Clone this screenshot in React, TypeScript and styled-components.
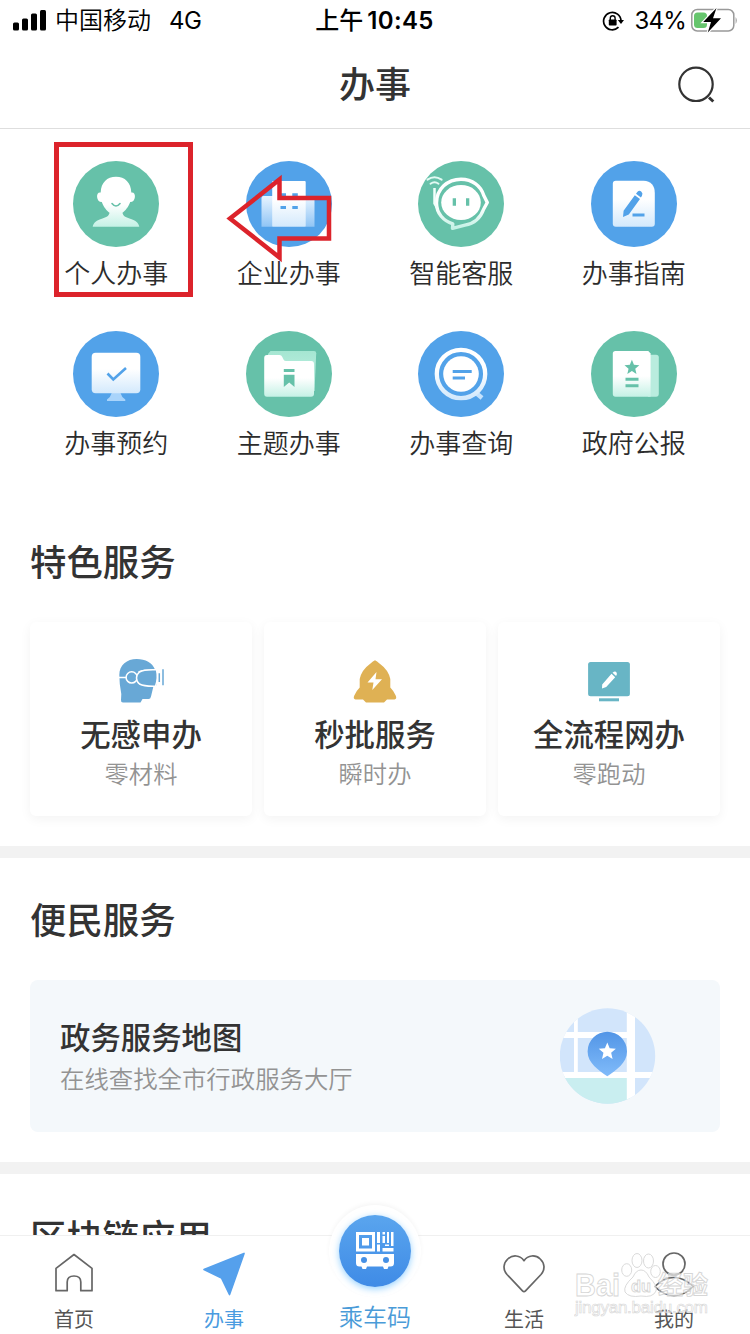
import React from 'react';
import styled, { createGlobalStyle } from 'styled-components';

const GlobalStyle = createGlobalStyle`
  body {
    margin: 0;
    background: #fff;
    font-family: 'Noto Sans CJK SC', sans-serif;
    color: #333;
  }
  svg { display: block; flex: none; }
`;

const GREEN = '#66c1a9';
const BLUE = '#52a2e9';

const Screen = styled.div`
  position: relative;
  width: 750px;
  height: 1334px;
  overflow: hidden;
  background: #fff;
  display: flex;
  flex-direction: column;
`;

const StatusBar = styled.div`
  flex: none;
  height: 41px;
  display: grid;
  grid-template-columns: 1fr auto 1fr;
  align-items: center;
  padding: 0 12px 0 13px;
  font-family: Inter, 'Noto Sans CJK SC', sans-serif;
  font-size: 24px;
  line-height: 41px;
  color: #000;
`;

const StatusGroup = styled.div<{ $end?: boolean }>`
  display: flex;
  align-items: center;
  justify-content: ${p => (p.$end ? 'flex-end' : 'flex-start')};
  white-space: nowrap;
`;

const Carrier = styled.span`
  margin-left: 8px;
  font-weight: 350;
`;

const Network = styled.span`
  margin-left: 18px;
  letter-spacing: -0.6px;
`;

const Clock = styled.div`
  font-weight: 600;
  letter-spacing: 0.4px;
`;

const Meridiem = styled.span`
  font-weight: 500;
  letter-spacing: 0;
  margin: 0 4px 0 -2px;
`;

const Percent = styled.span`
  margin: 0 4px 0 11px;
  letter-spacing: -0.8px;
`;

const Header = styled.header`
  flex: none;
  height: 87px;
  display: grid;
  grid-template-columns: 1fr auto 1fr;
  align-items: center;
  padding: 0 34px;
  border-bottom: 1px solid #dedede;
`;

const PageTitle = styled.h1`
  grid-column: 2;
  margin: -5px 0 0;
  font-size: 36px;
  line-height: 80px;
  font-weight: 500;
`;

const SearchButton = styled.div`
  justify-self: end;
`;

const ServiceGrid = styled.div`
  flex: none;
  display: grid;
  grid-template-columns: repeat(4, 1fr);
  grid-auto-rows: 170px;
  padding: 32px 30px 0;
  height: 340px;
`;

const Service = styled.div`
  display: flex;
  flex-direction: column;
  align-items: center;
`;

const ServiceLabel = styled.div`
  font-size: 26px;
  line-height: 30px;
  margin-top: 10px;
  font-weight: 350;
  color: #2c2c2c;
`;

const SectionTitle = styled.h2<{ $top: number }>`
  flex: none;
  margin: ${p => p.$top}px 0 0 30px;
  font-size: 36.4px;
  line-height: 40px;
  font-weight: 500;
`;

const CardRow = styled.div`
  flex: none;
  display: flex;
  gap: 12px;
  margin: 42px 30px 30px;
`;

const Card = styled.div`
  flex: 1;
  height: 194px;
  box-sizing: border-box;
  padding-top: 36px;
  display: flex;
  flex-direction: column;
  align-items: center;
  border-radius: 6px;
  background: #fff;
  box-shadow: 0 3px 12px rgba(0, 0, 0, 0.05);
`;

const CardTitle = styled.div`
  font-size: 30.4px;
  line-height: 36px;
  font-weight: 500;
  margin-top: 11px;
`;

const CardNote = styled.div`
  font-size: 24.3px;
  line-height: 30px;
  margin-top: 7px;
  font-weight: 350;
  color: #939393;
`;

const Divider = styled.div`
  flex: none;
  height: 12px;
  background: #f2f2f2;
`;

const MapCard = styled.div`
  flex: none;
  margin: 42px 30px 30px;
  height: 152px;
  box-sizing: border-box;
  padding: 4px 64px 0 30px;
  display: flex;
  justify-content: space-between;
  border-radius: 8px;
  background: #f4f8fb;
`;

const MapText = styled.div`
  padding-top: 34px;
`;

const MapTitle = styled.div`
  font-size: 30.4px;
  line-height: 36px;
  font-weight: 500;
`;

const MapNote = styled.div`
  font-size: 24.4px;
  line-height: 30px;
  margin-top: 9px;
  font-weight: 350;
  color: #939393;
`;

const MapArt = styled.div`
  padding-top: 24px;
`;

const TabBar = styled.nav`
  position: absolute;
  left: 0;
  right: 0;
  bottom: 0;
  height: 98px;
  display: grid;
  grid-template-columns: repeat(5, 1fr);
  background: #fff;
  border-top: 1px solid #f0f0f0;
`;

const Tab = styled.div<{ $active?: boolean }>`
  display: flex;
  flex-direction: column;
  align-items: center;
  padding: 13px 2px 0 0;
  font-size: 20px;
  line-height: 24px;
  color: ${p => (p.$active ? '#4a9be0' : '#555')};
`;

const TabLabel = styled.div`
  margin-top: 10px;
`;

const CenterTab = styled.div`
  display: flex;
  flex-direction: column;
  align-items: center;
  font-size: 24px;
  line-height: 28px;
  font-weight: 350;
  color: #4a9bd8;
`;

const RideButton = styled.div`
  margin-top: -31px;
  padding: 10px;
  border-radius: 50%;
  background: #fff;
  box-shadow: 0 -2px 4px rgba(0, 0, 0, 0.04);
`;

const RideDisc = styled.div`
  width: 72px;
  height: 72px;
  border-radius: 50%;
  display: flex;
  align-items: center;
  justify-content: center;
  background: linear-gradient(#5aa5ee, #3f8be6);
  box-shadow: 0 2px 7px rgba(80, 180, 255, 0.6);
`;

const RideLabel = styled.div`
  margin-top: 5px;
`;

const Highlight = styled.div`
  position: absolute;
  left: 54px;
  top: 142px;
  width: 129px;
  height: 145px;
  border: 5px solid #dc232b;
`;

const Pointer = styled.svg`
  position: absolute;
  left: 224px;
  top: 170px;
`;

const Watermark = styled.div`
  position: absolute;
  left: 574px;
  top: 1250px;
  width: 140px;
  height: 70px;
  opacity: 0.85;
`;

const Defs = () => (
  <svg width="0" height="0" style={{ position: 'absolute' }}>
    <defs>
      <linearGradient id="mint" x1="0" y1="0" x2="0" y2="1">
        <stop offset="0.55" stopColor="#fff" />
        <stop offset="1" stopColor="#c4f1e5" />
      </linearGradient>
      <linearGradient id="sky" x1="0" y1="0" x2="0" y2="1">
        <stop offset="0.4" stopColor="#fff" />
        <stop offset="1" stopColor="#d3e9fc" />
      </linearGradient>
      <linearGradient id="wing" x1="0" y1="0" x2="0" y2="1">
        <stop offset="0" stopColor="#e8f4ff" />
        <stop offset="1" stopColor="#90c5f5" />
      </linearGradient>
      <linearGradient id="mintBack" x1="0" y1="0" x2="0" y2="1">
        <stop offset="0" stopColor="#a5e6d2" />
        <stop offset="1" stopColor="#c9f3e7" />
      </linearGradient>
      <linearGradient id="pin" x1="0" y1="0" x2="0" y2="1">
        <stop offset="0" stopColor="#5295e6" />
        <stop offset="1" stopColor="#80bbfa" />
      </linearGradient>
    </defs>
  </svg>
);

const star = (cx: number, cy: number, r: number, k = 0.45) =>
  Array.from({ length: 10 }, (_, i) => {
    const a = (Math.PI / 5) * i - Math.PI / 2;
    const q = i % 2 ? r * k : r;
    return `${(cx + q * Math.cos(a)).toFixed(2)},${(cy + q * Math.sin(a)).toFixed(2)}`;
  }).join(' ');

const Round = ({ color, children }: { color: string; children: React.ReactNode }) => (
  <svg width="86" height="86" viewBox="0 0 86 86" fill="none">
    <circle cx="43" cy="43" r="43" fill={color} />
    {children}
  </svg>
);

const PersonIcon = () => (
  <Round color={GREEN}>
    <path
      fill="url(#mint)"
      d="M43 15.700C52 15.700 58 21.500 58.300 31.500C60.800 31 62.200 33.200 61.900 36C61.600 39 60 41 57.200 41C55.500 46 52 50 49.500 51.800C49.800 55 53 56.500 56.500 57.500C62.500 59.300 65.500 61.500 66.300 65.800H19.700C20.500 61.500 23.500 59.300 29.500 57.500C33 56.500 36.200 55 36.500 51.800C34 50 30.500 46 28.800 41C26 41 24.400 39 24.100 36C23.800 33.200 25.200 31 27.700 31.500C28 21.500 34 15.700 43 15.700Z"
    />
    <path d="M39 42.500Q43 47.500 47 42.500" stroke={GREEN} strokeWidth="1.600" strokeLinecap="round" />
  </Round>
);

const BuildingIcon = () => (
  <Round color={BLUE}>
    <path fill="url(#wing)" d="M15.500 37q0-2 2-2H27V65.800H15.500ZM59 35h7.500q2 0 2 2V65.800H59Z" />
    <rect x="26.200" y="20" width="33.500" height="45.800" rx="1" fill="url(#sky)" />
    <path fill={BLUE} d="M34.500 32.300h5.500v3h-5.500zM46.300 32.300h5.500v3h-5.500zM34.500 45h5.500v3h-5.500zM46.300 45h5.500v3h-5.500z" />
  </Round>
);

const RobotIcon = () => (
  <Round color={GREEN}>
    <path
      stroke="url(#mint)"
      strokeWidth="3.400"
      strokeLinejoin="round"
      d="M18.500 42C18.500 28 29.500 18.200 43 18.200C54.500 18.200 63 25 65.800 34.500L69.300 41.500L65.500 48.500C62.500 57 56 62.500 47 64.200L34.500 67.300L34.800 62.800C25.500 60 18.500 52.500 18.500 42Z"
    />
    <ellipse cx="43" cy="41.500" rx="19.800" ry="17.500" fill="#fff" />
    <path fill={GREEN} d="M34.700 37.300h3.300v7.400h-3.300zM48 37.300h3.300v7.400H48z" />
    <path d="M16.500 27V42.500L19 47" stroke="#f2fffb" strokeWidth="2.500" />
    <path d="M9.500 18.700Q16.400 14 23.600 18.700M12.500 22.700Q16.500 19.800 20.500 22.700" stroke="#e3faf3" strokeWidth="2" strokeLinecap="round" />
  </Round>
);

const GuideIcon = () => (
  <Round color={BLUE}>
    <path fill="url(#sky)" d="M24.800 19.700H52.500Q63.800 20.500 63.800 32V62.800Q63.800 65.800 60.800 65.800H24.800Q21.800 65.800 21.800 62.800V22.700Q21.800 19.700 24.800 19.700Z" />
    <path fill={BLUE} d="M43.800 34.200L49 37.900L37.800 53.500L32 56L32.600 49.800ZM45 32.800L46.500 30.800Q48.300 29 50.200 30.500Q52.300 32.300 51 34.700L49.900 36.400Z" />
    <path d="M41.500 54H53.500" stroke={BLUE} strokeWidth="3" />
  </Round>
);

const BookingIcon = () => (
  <Round color={BLUE}>
    <path fill="#a9d4fb" d="M38.700 62H47.500Q48.500 66 52.300 68.500V70H34V68.500Q37.700 66 38.700 62Z" />
    <rect x="18.700" y="21.700" width="48.600" height="40.600" rx="4" fill="url(#sky)" />
    <path d="M34.500 42.500L40.300 48.500L53 37" stroke={BLUE} strokeWidth="2.600" />
  </Round>
);

const FolderIcon = () => (
  <Round color={GREEN}>
    <path fill="url(#mintBack)" d="M24.500 20H68Q70.300 20 70.200 22.300L68.500 60H22V23Z" />
    <path fill="url(#mint)" d="M21 24H33.500Q35.500 24 36.300 26L37.500 28.500Q38.300 30 40 30H65.300Q68 30 68 33V62.800Q68 65.800 65 65.800H21Q18.200 65.800 18.200 62.800V27Q18.200 24 21 24Z" />
    <path fill={GREEN} d="M37.800 38H48.500V41H37.800ZM37.800 43.700H48.500V56L43.200 51.500L37.800 56Z" />
  </Round>
);

const QueryIcon = () => (
  <Round color={BLUE}>
    <path d="M57.500 61.500L64 67" stroke="#c5e2fc" strokeWidth="4.500" />
    <circle cx="43" cy="43" r="24.200" stroke="url(#sky)" strokeWidth="4.300" />
    <circle cx="43" cy="43" r="17.800" fill="#fff" />
    <path d="M34.700 40.400H53.700M34.700 47H47" stroke={BLUE} strokeWidth="3" />
  </Round>
);

const GazetteIcon = () => (
  <Round color={GREEN}>
    <path fill="#b9ecde" d="M57 23.700H65Q67.800 23.700 67.800 26.500V62.800Q67.800 65.800 65 65.800H57Z" />
    <path fill="url(#mint)" d="M24.500 20H57.300L59.600 22.500V65.800H24.500Q21.800 65.800 21.800 62.800V22.700Q21.800 20 24.500 20Z" />
    <polygon fill={GREEN} points={star(40.9, 36.6, 7.8)} />
    <path d="M34.500 48.300H47.500M34.500 54.700H47.500" stroke={GREEN} strokeWidth="3" />
  </Round>
);

const SERVICES = [
  { label: '个人办事', Icon: PersonIcon },
  { label: '企业办事', Icon: BuildingIcon },
  { label: '智能客服', Icon: RobotIcon },
  { label: '办事指南', Icon: GuideIcon },
  { label: '办事预约', Icon: BookingIcon },
  { label: '主题办事', Icon: FolderIcon },
  { label: '办事查询', Icon: QueryIcon },
  { label: '政府公报', Icon: GazetteIcon },
];

const HeadsetIcon = () => (
  <svg width="46" height="46" viewBox="0 0 46 46" fill="none">
    <path
      fill="#68a8d6"
      d="M1.300 17C1.300 7 9 1 18.700 1C27.500 1 34.500 5 37 11.500L38.500 12V27.500L35.500 28L33 38.500Q32.500 41 30.500 41H24.500L22.500 44.500H5Q2.800 44.500 3 42L3.300 36Q1.300 26 1.300 17Z"
    />
    <path d="M1 19.400H8.500M20.500 14Q25 11.800 38.500 12M20.500 25Q25 28 38.500 28" stroke="#fff" strokeWidth="1.500" />
    <circle cx="13.700" cy="19.400" r="5.600" stroke="#fff" strokeWidth="1.500" />
    <path fill="#68a8d6" stroke="#fff" strokeWidth="1.500" d="M38.500 11.800Q26 11.300 21.500 14Q18.500 16.500 18.500 20Q18.500 23.500 21.500 26Q26 28.500 37.500 28.200Q40.500 20 38.500 11.800Z" />
    <path d="M41.300 15.300V24M45 11.300V27.300" stroke="#68a8d6" strokeWidth="1.500" />
  </svg>
);

const RocketIcon = () => (
  <svg width="46" height="46" viewBox="0 0 46 46">
    <path
      fill="#dfb154"
      d="M23 2.300Q25 3 27.500 5.500Q36.500 12 38.300 21V29.500Q41 32 43.700 37.500Q45.200 41 42.500 41.500H35L32 44.500H14L11 41.500H3.500Q.8 41 2.300 37.500Q5 32 7.700 29.500V21Q9.500 12 18.500 5.500Q21 3 23 2.300Z"
    />
    <path fill="#fff" d="M24.500 14L15.500 24.500H21.500L20.300 32L30 21.300H23.500Z" />
  </svg>
);

const OnlineIcon = () => (
  <svg width="46" height="46" viewBox="0 0 46 46">
    <rect x="2.100" y="4" width="41.800" height="34.300" rx="2.500" fill="#68b5c5" />
    <rect x="13" y="40.300" width="20" height="3" fill="#68b5c5" />
    <path fill="#fff" d="M25.500 15.800L29.200 19.200L20.200 29L16 30.500L16.200 26.500ZM26.500 14.700Q29 12.800 30.400 14.200Q31.700 15.800 30.100 18.100Z" />
  </svg>
);

const FEATURES = [
  { title: '无感申办', note: '零材料', Icon: HeadsetIcon },
  { title: '秒批服务', note: '瞬时办', Icon: RocketIcon },
  { title: '全流程网办', note: '零跑动', Icon: OnlineIcon },
];

const MapIcon = () => (
  <svg width="96" height="96" viewBox="0 0 96 96">
    <clipPath id="globe"><circle cx="47.500" cy="48" r="47.700" /></clipPath>
    <g clipPath="url(#globe)">
      <path fill="#d2e5fb" d="M0 0H96V96H0Z" />
      <path fill="#c9eef0" d="M0 67H70V96H0Z" />
      <path fill="#fff" d="M14 0h3.800v67H14zM0 24h68v6H0zM0 64h96v6H0zM66.800 0h8.200v96h-8.200z" />
    </g>
    <path fill="url(#pin)" d="M47.300 23.700A19.700 19.700 0 0 1 67 43.400C67 55 56 62 47.300 68.200C38.600 62 27.600 55 27.600 43.400A19.700 19.700 0 0 1 47.300 23.700Z" />
    <polygon fill="#fff" points={star(47.3, 43.6, 9)} />
  </svg>
);

const TabIcon = styled.svg.attrs({ width: 44, height: 48, viewBox: '0 0 44 48' })`
  fill: none;
  stroke: #666;
  stroke-width: 1.7px;
  stroke-linejoin: round;
`;

const HomeIcon = () => (
  <TabIcon>
    <path d="M22 5.500L40 19.300V41.700H28.800V33Q28.800 27 22 27Q15.200 27 15.200 33V41.700H4V19.300Z" />
  </TabIcon>
);

const PlaneShape = styled.path`
  fill: #55a0ec;
  stroke: #55a0ec;
`;

const PlaneIcon = () => (
  <TabIcon>
    <PlaneShape d="M42 4.500L27.500 45.500L19.500 29L2 20.500Z" />
  </TabIcon>
);

const HeartIcon = () => (
  <TabIcon>
    <path d="M22 11.700C18 6 10.500 5.500 5.800 10C1 14.500 .8 20.500 5 25.500L20.500 41.800Q22 43.300 23.500 41.800L39 25.500C43.200 20.500 43 14.500 38.200 10C33.500 5.500 26 6 22 11.700Z" />
  </TabIcon>
);

const MeIcon = () => (
  <TabIcon>
    <circle cx="22" cy="15" r="11" />
    <path d="M2.800 37.500Q12 28.500 22 28.500Q32 28.500 41.200 37.500Q32 46.700 22 46.700Q12 46.700 2.800 37.500Z" />
  </TabIcon>
);

const BusIcon = () => (
  <svg width="40" height="40" viewBox="0 0 40 40">
    <path
      fill="#fff"
      fillRule="evenodd"
      d="M1 1H20V20.500H1ZM4 4V17.500H17V4ZM7 7H14V14.500H7ZM22 1H25V12H22ZM27.500 5H30V12H27.500ZM32 1H34V12H32ZM36 1H38.500V15H36ZM22 13.500H25V20.500H22ZM27.500 1H30V3.500H27.500ZM27.500 17H38.500V20.500H27.500ZM30 13.500H34V15H30Z"
    />
    <path fill="#fff" d="M1 23H39V32Q39 35.500 35.500 35.500H33.500L32.500 38H29L28 35.500H12L11 38H7.500L6.500 35.500H4.500Q1 35.500 1 32Z" />
    <circle cx="9" cy="29" r="3" fill="#4690e5" />
    <circle cx="31" cy="29" r="3" fill="#4690e5" />
  </svg>
);

const SignalIcon = () => (
  <svg width="34" height="22" viewBox="0 0 34 22">
    <rect x="0" y="12.500" width="6" height="8" rx="1.500" />
    <rect x="9" y="8.500" width="6" height="12" rx="1.500" />
    <rect x="18" y="3.500" width="6" height="17" rx="1.500" />
    <rect x="27" y="0" width="6" height="20.500" rx="1.500" />
  </svg>
);

const LockIcon = () => (
  <svg width="22" height="22" viewBox="0 0 22 22" fill="none" stroke="#000">
    <path d="M16.500 17.200A8.700 8.700 0 1 1 19 11" strokeWidth="1.700" />
    <path d="M15.800 10H22L19 14Z" fill="#000" stroke="none" />
    <rect x="6.800" y="9.500" width="7.800" height="6" rx=".8" fill="#000" stroke="none" />
    <path d="M8.300 10V8Q8.300 5.700 10.700 5.700Q13.100 5.700 13.100 8V10" strokeWidth="1.400" />
  </svg>
);

const BatteryIcon = () => (
  <svg width="48" height="26" viewBox="0 0 48 26">
    <rect x="1.800" y="1.500" width="42" height="21.500" rx="5.500" fill="none" stroke="#999" strokeWidth="1.500" />
    <path d="M45.600 9Q48 12.300 45.600 16Z" fill="#999" />
    <rect x="4" y="4.500" width="13" height="15.500" rx="3.500" fill="#66c56d" />
    <path fill="#000" stroke="#fff" strokeWidth="2.400" paintOrder="stroke" d="M26.500 0L13.200 14H21L17.800 24.500L31 10.300H23Z" />
  </svg>
);

const SearchIcon = () => (
  <svg width="40" height="40" viewBox="0 0 40 40" fill="none" stroke="#333">
    <circle cx="20" cy="19.300" r="16.700" strokeWidth="2.200" />
    <path d="M33 32.500L37.300 36.500" strokeWidth="3" />
  </svg>
);

export default function App() {
  return (
    <>
      <GlobalStyle />
      <Defs />
      <Screen>
        <StatusBar>
          <StatusGroup>
            <SignalIcon />
            <Carrier>中国移动</Carrier>
            <Network>4G</Network>
          </StatusGroup>
          <Clock><Meridiem>上午</Meridiem>10:45</Clock>
          <StatusGroup $end>
            <LockIcon />
            <Percent>34%</Percent>
            <BatteryIcon />
          </StatusGroup>
        </StatusBar>
        <Header>
          <PageTitle>办事</PageTitle>
          <SearchButton><SearchIcon /></SearchButton>
        </Header>
        <ServiceGrid>
          {SERVICES.map(({ label, Icon }) => (
            <Service key={label}>
              <Icon />
              <ServiceLabel>{label}</ServiceLabel>
            </Service>
          ))}
        </ServiceGrid>
        <SectionTitle $top={39}>特色服务</SectionTitle>
        <CardRow>
          {FEATURES.map(({ title, note, Icon }) => (
            <Card key={title}>
              <Icon />
              <CardTitle>{title}</CardTitle>
              <CardNote>{note}</CardNote>
            </Card>
          ))}
        </CardRow>
        <Divider />
        <SectionTitle $top={40}>便民服务</SectionTitle>
        <MapCard>
          <MapText>
            <MapTitle>政务服务地图</MapTitle>
            <MapNote>在线查找全市行政服务大厅</MapNote>
          </MapText>
          <MapArt><MapIcon /></MapArt>
        </MapCard>
        <Divider />
        <SectionTitle $top={41}>区块链应用</SectionTitle>
        <TabBar>
          <Tab><HomeIcon /><TabLabel>首页</TabLabel></Tab>
          <Tab $active><PlaneIcon /><TabLabel>办事</TabLabel></Tab>
          <CenterTab>
            <RideButton><RideDisc><BusIcon /></RideDisc></RideButton>
            <RideLabel>乘车码</RideLabel>
          </CenterTab>
          <Tab><HeartIcon /><TabLabel>生活</TabLabel></Tab>
          <Tab><MeIcon /><TabLabel>我的</TabLabel></Tab>
        </TabBar>
        <Highlight />
        <Pointer width="110" height="94" viewBox="0 0 110 94" fill="none">
          <path d="M6 48.500L55.500 9.500V28H105V68.500H55.500V87.500Z" stroke="#dc232b" strokeWidth="4.500" />
        </Pointer>
        <Watermark>
          <svg width="140" height="70" viewBox="0 0 140 70" fill="#fff" fillOpacity=".75" stroke="#cfcfcf" strokeWidth=".9" fontFamily="'Liberation Sans', 'Noto Sans CJK SC', sans-serif" fontWeight="700">
            <text x="1" y="46" fontSize="31" textLength="45" lengthAdjust="spacingAndGlyphs">Bai</text>
            <ellipse cx="52.700" cy="20" rx="5" ry="6.300" />
            <ellipse cx="63" cy="10.500" rx="5" ry="7" />
            <ellipse cx="74.500" cy="11" rx="5" ry="7" />
            <ellipse cx="81.500" cy="21.500" rx="4.800" ry="6" />
            <path d="M67 20Q72 20 75 27Q84 36 82 41Q79 48 67 46Q55 48 51 42Q49 36 59 27Q62 20 67 20Z" />
            <text x="57" y="42" fontSize="17" textLength="20" lengthAdjust="spacingAndGlyphs">du</text>
            <text x="84" y="44" fontSize="25" textLength="50">经验</text>
            <text x="1" y="63" fontSize="17" textLength="133" fontWeight="400" strokeWidth=".6">jingyan.baidu.com</text>
          </svg>
        </Watermark>
      </Screen>
    </>
  );
}
